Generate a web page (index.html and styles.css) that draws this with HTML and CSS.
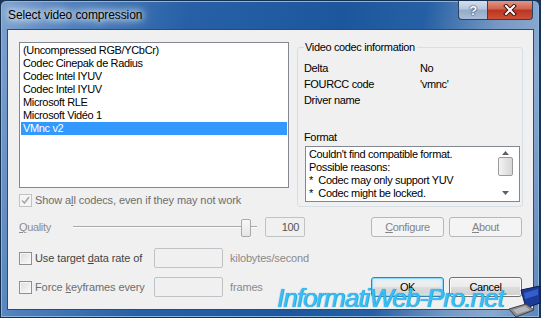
FILE: index.html
```html
<!DOCTYPE html>
<html lang="en">
<head>
  <meta charset="UTF-8" />
  <title>Select video compression</title>
  <link rel="stylesheet" href="styles.css">
</head>
<body>
  <div class="window">
    <div class="titlebar">
      <span class="title">Select video compression</span>
      <div class="caption-buttons">
        <span class="cap-btn help">?</span>
        <span class="cap-btn close">
          <svg width="14" height="12" viewBox="0 0 14 12">
            <path d="M3 2 L11 10 M11 2 L3 10" stroke="#3b1410" stroke-width="4" stroke-linecap="square" />
            <path d="M3 2 L11 10 M11 2 L3 10" stroke="#fff" stroke-width="2" stroke-linecap="square" />
          </svg>
        </span>
      </div>
    </div>

    <div class="client">
      <div class="top">
        <div class="left-col">
          <ul class="listbox">
            <li>(Uncompressed RGB/YCbCr)</li>
            <li>Codec Cinepak de Radius</li>
            <li>Codec Intel IYUV</li>
            <li>Codec Intel IYUV</li>
            <li>Microsoft RLE</li>
            <li>Microsoft Vidéo 1</li>
            <li class="selected">VMnc v2</li>
          </ul>
          <label class="check disabled">
            <span class="box">
              <svg width="11" height="11" viewBox="0 0 11 11"><path d="M2 5.5 L4.5 8 L9 2" fill="none" stroke="#a8a8a8" stroke-width="1.6" /></svg>
            </span>
            <span>Show a<u>l</u>l codecs, even if they may not work</span>
          </label>
        </div>

        <fieldset class="group">
          <legend>Video codec information</legend>
          <div class="info">
            <span>Delta</span><span>No</span>
            <span>FOURCC code</span><span>'vmnc'</span>
            <span>Driver name</span><span></span>
          </div>
          <div class="format-label">Format</div>
          <div class="format-box">
            <div class="format-text">
              <div>Couldn't find compatible format.</div>
              <div>Possible reasons:</div>
              <div>*&nbsp; Codec may only support YUV</div>
              <div>*&nbsp; Codec might be locked.</div>
            </div>
            <div class="scrollbar">
              <svg class="arrow" width="7" height="4" viewBox="0 0 7 4"><polygon points="0,4 3.5,0 7,4" fill="#606060" /></svg>
              <span class="thumb"></span>
              <svg class="arrow down" width="7" height="4" viewBox="0 0 7 4"><polygon points="0,0 3.5,4 7,0" fill="#606060" /></svg>
            </div>
          </div>
        </fieldset>
      </div>

      <div class="row quality-row">
        <span class="quality-label"><u>Q</u>uality</span>
        <div class="slider">
          <span class="track"></span>
          <span class="knob"></span>
        </div>
        <span class="edit value">100</span>
        <div class="buttons">
          <span class="btn disabled"><u>C</u>onfigure</span>
          <span class="btn disabled"><u>A</u>bout</span>
        </div>
      </div>

      <div class="row rate-row">
        <label class="check dark"><span class="box"></span><span>Use target <u>d</u>ata rate of</span></label>
        <span class="edit"></span>
        <span class="unit">kilobytes/second</span>
      </div>

      <div class="row key-row">
        <label class="check"><span class="box"></span><span>Force <u>k</u>eyframes every</span></label>
        <span class="edit"></span>
        <span class="unit">frames</span>
        <div class="buttons">
          <span class="btn default">OK</span>
          <span class="btn">Cancel</span>
        </div>
      </div>
    </div>

    <div class="watermark">InformatiWeb-Pro.net</div>
    <svg class="laptop" width="33" height="33" viewBox="0 0 33 33">
      <polygon points="13,5 32,1 32,18 18,23" fill="#1c3a9a" stroke="#0b1a4a" stroke-width="1" />
      <polygon points="16,8 30,4 30,10 17,14" fill="#3f6fd8" opacity="0.7" />
      <polygon points="1,24 18,19 26,25 8,32" fill="#8b8d91" stroke="#3f4043" stroke-width="1" />
      <polygon points="5,25 17,21 22,25 9,29" fill="#b4b6ba" />
    </svg>
  </div>
</body>
</html>
```

FILE: styles.css
```css
body {
  margin: 0;
  background: #1c3354;
  font-family: "Liberation Sans", Arial, sans-serif;
  font-size: 11px;
  letter-spacing: -0.35px;
}
.window {
  position: relative;
  width: 540px;
  height: 318px;
  box-sizing: border-box;
  border: 1px solid #16304f;
  border-radius: 6px 6px 0 0;
  padding: 0 5px 7px 6px;
  background: linear-gradient(100deg, #7fa3cf 0%, #4f80bd 12%, #2760a6 32%, #1c579d 58%, #2660a4 72%, #7497c3 84%, #8aa9cf 92%, #5c86bb 100%);
  box-shadow: inset 0 0 0 1px #8fb4dc;
}
.titlebar {
  height: 28px;
  display: flex;
  justify-content: space-between;
  align-items: flex-start;
}
.title {
  margin-top: 7px;
  padding-left: 1px;
  font-size: 12px;
  letter-spacing: -0.1px;
  color: #000;
  text-shadow: 0 0 6px #fff, 0 0 10px #fff, 0 0 14px #e8f2ff;
}
.caption-buttons {
  display: flex;
  margin-right: 1px;
}
.cap-btn {
  height: 19px;
  display: flex;
  align-items: center;
  justify-content: center;
  box-sizing: border-box;
  border: 1px solid #2b4260;
  border-top: none;
}
.help {
  width: 29px;
  border-radius: 0 0 0 4px;
  border-right: none;
  background: linear-gradient(#d4dfec, #b4c6dc 45%, #93abc9 50%, #a8bdd6);
  color: #fff;
  font-weight: bold;
  font-size: 13px;
  text-shadow: 0 0 2px #203650, 0 0 1px #203650;
}
.close {
  width: 46px;
  border-radius: 0 0 4px 0;
  background: linear-gradient(#e39584, #cf624d 45%, #bb3521 50%, #cc5038);
}
.client {
  height: 281px;
  box-sizing: border-box;
  background: #f0f0f0;
  border: 1px solid #2c4b70;
  padding: 11px 10px 0 11px;
  display: flex;
  flex-direction: column;
  color: #000;
}
.top {
  display: flex;
  gap: 8px;
  height: 166px;
}
.left-col {
  width: 270px;
  display: flex;
  flex-direction: column;
}
.listbox {
  list-style: none;
  margin: 1px 0 0;
  padding: 1px;
  height: 146px;
  box-sizing: border-box;
  border: 1px solid #828790;
  background: #fff;
}
.listbox li {
  height: 13px;
  line-height: 13px;
  padding-left: 2px;
}
.listbox li.selected {
  background: #3399ff;
  color: #fff;
}
.check {
  display: flex;
  align-items: center;
  gap: 3px;
  height: 14px;
  line-height: 14px;
  letter-spacing: -0.1px;
  color: #6d6d6d;
}
.left-col .check {
  margin-top: 5px;
}
.check.dark {
  color: #444;
}
.box {
  width: 13px;
  height: 13px;
  flex: none;
  box-sizing: border-box;
  border: 1px solid #8e8f8f;
  background: linear-gradient(135deg, #dcdcdc, #fbfbfb);
  box-shadow: inset 0 0 0 1px #f6f6f6;
  display: flex;
  align-items: center;
  justify-content: center;
}
.check.disabled .box {
  border-color: #c2c2c2;
  background: #f4f4f4;
}
.group {
  width: 226px;
  height: 166px;
  box-sizing: border-box;
  margin: 0;
  padding: 0 2px 4px 6px;
  border: 1px solid #d5dfe5;
  border-radius: 3px;
  min-inline-size: 0;
}
.group legend {
  padding: 0 2px 0 1px;
  line-height: 13px;
}
.info {
  margin-top: 6px;
  display: grid;
  grid-template-columns: 116px 1fr;
  grid-auto-rows: 16px;
  line-height: 16px;
}
.format-label {
  margin-top: 23px;
  line-height: 13px;
}
.format-box {
  margin: 2px 0 0 1px;
  width: 215px;
  height: 56px;
  box-sizing: border-box;
  border: 1px solid #828790;
  background: #fff;
  display: flex;
}
.format-text {
  flex: 1;
  padding: 1px 0 0 3px;
  line-height: 13px;
}
.scrollbar {
  width: 17px;
  margin-right: 5px;
  display: flex;
  flex-direction: column;
  align-items: center;
}
.arrow {
  flex: none;
  margin-top: 4px;
}
.arrow.down {
  margin-top: auto;
  margin-bottom: 6px;
}
.thumb {
  flex: none;
  margin-top: 2px;
  width: 15px;
  height: 19px;
  box-sizing: border-box;
  border: 1px solid #9a9a9a;
  border-radius: 2px;
  background: linear-gradient(to right, #f4f4f4, #e4e4e4 50%, #d6d6d6);
}
.row {
  display: flex;
  align-items: center;
  height: 20px;
}
.quality-row {
  margin-top: 10px;
}
.rate-row {
  margin-top: 11px;
}
.key-row {
  margin-top: 9px;
}
.quality-label {
  width: 54px;
  color: #8d8d8d;
}
.slider {
  position: relative;
  width: 184px;
  height: 20px;
  display: flex;
  align-items: center;
}
.track {
  width: 100%;
  height: 0;
  border-top: 1px solid #a9a9a9;
  border-bottom: 1px solid #fdfdfd;
}
.knob {
  position: absolute;
  left: 168px;
  top: 2px;
  width: 10px;
  height: 18px;
  box-sizing: border-box;
  border: 1px solid #a8a8a8;
  border-radius: 2px;
  background: linear-gradient(#f7f7f7, #e6e6e6);
}
.edit {
  width: 69px;
  height: 20px;
  box-sizing: border-box;
  border: 1px solid #bfc3c7;
  border-radius: 2px;
  background: #f0f0f0;
}
.edit.value {
  width: 40px;
  margin-left: 8px;
  padding-right: 5px;
  text-align: right;
  line-height: 18px;
  color: #555;
}
.rate-row .check,
.key-row .check {
  width: 135px;
}
.unit {
  margin-left: 7px;
  letter-spacing: -0.15px;
  color: #8a8a8a;
}
.buttons {
  margin-left: auto;
  margin-right: 1px;
  display: flex;
  gap: 5px;
}
.btn {
  width: 73px;
  height: 20px;
  box-sizing: border-box;
  border: 1px solid #707070;
  border-radius: 3px;
  line-height: 18px;
  text-align: center;
  background: linear-gradient(#f2f2f2, #ebebeb 50%, #dddddd 50%, #cfcfcf);
  box-shadow: inset 0 0 0 1px #fbfbfb;
}
.btn.disabled {
  border-color: #b4b8bb;
  background: #f4f4f4;
  color: #838383;
  box-shadow: none;
}
.btn.default {
  border-color: #3c7fb1;
  box-shadow: inset 0 0 0 1px #8fd8fa, inset 0 0 3px 2px #c6ecfc;
}
.watermark {
  position: absolute;
  left: 276px;
  top: 283px;
  font-size: 26px;
  line-height: 28px;
  font-style: italic;
  letter-spacing: -1px;
  color: #37bff6;
  text-shadow: 0 0 1px #1677b5, 0.5px 0 0 #37bff6;
}
.laptop {
  position: absolute;
  left: 507px;
  top: 284px;
}
```
